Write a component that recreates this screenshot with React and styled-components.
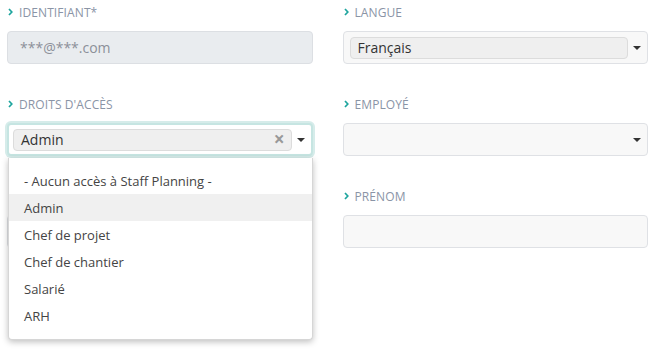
import React from 'react';
import styled, { createGlobalStyle } from 'styled-components';

const GlobalStyle = createGlobalStyle`
  html, body {
    margin: 0;
    min-height: 350px;
    background: #fff;
    font-family: "Open Sans", Arial, sans-serif;
  }
  #root {
    min-height: 350px;
  }
`;

const Form = styled.div`
  display: grid;
  grid-template-columns: 1fr 1fr;
  column-gap: 30px;
  row-gap: 31px;
  padding: 3px 10px 0 7px;
`;

const Field = styled.div`
  position: relative;
  display: flex;
  flex-direction: column;
`;

const Label = styled.div`
  display: flex;
  align-items: center;
  gap: 6px;
  height: 18px;
  margin: 0 0 10px 1px;
  font-size: 12px;
  color: #8a94a6;
  text-transform: uppercase;
  letter-spacing: 0.1px;
`;

const Input = styled.div`
  box-sizing: border-box;
  height: 33px;
  padding: 0 12px;
  display: flex;
  align-items: center;
  border: 1px solid ${(p) => (p.disabled ? '#dcdfe3' : '#dfe1e5')};
  border-radius: 4px;
  background: ${(p) => (p.disabled ? '#e9ecef' : '#f8f8f8')};
  color: #8c9099;
  font-size: 14px;
`;

const Select = styled.div`
  box-sizing: border-box;
  height: 33px;
  padding: 0 4px 0 ${(p) => (p.focused ? '4px' : '6px')};
  display: flex;
  align-items: center;
  gap: 3px;
  border: ${(p) => (p.focused ? '2px solid #c6e5e2' : '1px solid #dfe1e5')};
  border-radius: 4px;
  box-shadow: ${(p) => (p.focused ? '0 0 0 2px #d6ecea' : 'none')};
  background: ${(p) => (p.focused ? '#fff' : '#f8f8f8')};
`;

const Tag = styled.div`
  flex: 1;
  box-sizing: border-box;
  height: 22px;
  display: flex;
  align-items: center;
  justify-content: space-between;
  padding: 0 6px 0 7px;
  background: #efefef;
  border: 1px solid #dcdcdc;
  border-radius: 4px;
  color: #333;
  font-size: 14px;
`;

const Spacer = styled.div`
  flex: 1;
`;

const Clear = styled.span`
  color: #999;
  font-size: 19px;
  font-weight: 700;
  line-height: 1;
`;

const Caret = styled.span`
  width: 0;
  height: 0;
  border-left: 4px solid transparent;
  border-right: 4px solid transparent;
  border-top: 4px solid #333;
  margin: 0 2px;
`;

const Menu = styled.ul`
  position: absolute;
  top: 63px;
  left: 1px;
  right: 0;
  z-index: 2;
  margin: 0;
  padding: 9px 0 10px;
  list-style: none;
  background: #fff;
  border: 1px solid #d6d6d6;
  border-top: none;
  border-radius: 0 0 4px 4px;
  box-shadow: 0 2px 6px rgba(0, 0, 0, 0.25);
`;

const Option = styled.li`
  height: 27px;
  display: flex;
  align-items: center;
  padding: 0 15px;
  font-size: 13px;
  color: #444;
  background: ${(p) => (p.active ? '#f0f0f0' : 'transparent')};
`;

const Chevron = () => (
  <svg width="5" height="8" viewBox="0 0 5 8">
    <path d="M1 1 L3.8 4 L1 7" fill="none" stroke="#1ea59e" strokeWidth="1.7" />
  </svg>
);

const options = [
  '- Aucun accès à Staff Planning -',
  'Admin',
  'Chef de projet',
  'Chef de chantier',
  'Salarié',
  'ARH',
];

export default function App() {
  return (
    <>
      <GlobalStyle />
      <Form>
        <Field>
          <Label><Chevron />Identifiant*</Label>
          <Input disabled>***@***.com</Input>
        </Field>
        <Field>
          <Label><Chevron />Langue</Label>
          <Select>
            <Tag>Français</Tag>
            <Caret />
          </Select>
        </Field>
        <Field>
          <Label><Chevron />Droits d'accès</Label>
          <Select focused>
            <Tag>
              Admin
              <Clear>×</Clear>
            </Tag>
            <Caret />
          </Select>
          <Menu>
            {options.map((o) => (
              <Option key={o} active={o === 'Admin'}>{o}</Option>
            ))}
          </Menu>
        </Field>
        <Field>
          <Label><Chevron />Employé</Label>
          <Select>
            <Spacer />
            <Caret />
          </Select>
        </Field>
        <Field>
          {/* field hidden behind the open menu */}
          <Label />
          <Input />
        </Field>
        <Field>
          <Label><Chevron />Prénom</Label>
          <Input />
        </Field>
      </Form>
    </>
  );
}
